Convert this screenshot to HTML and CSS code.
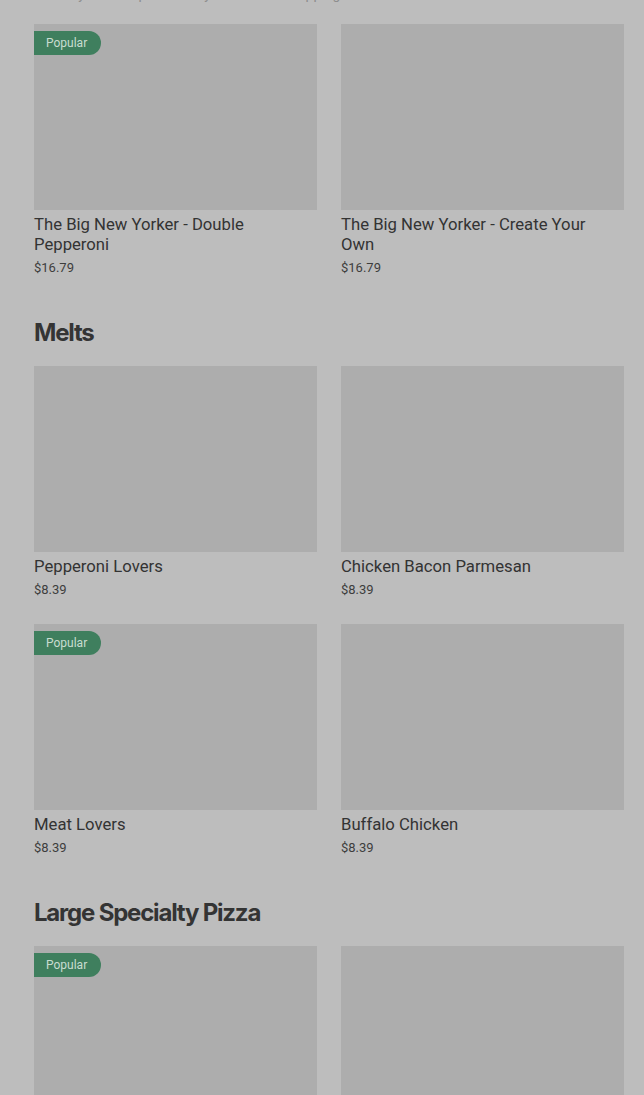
FILE: index.html
```html
<!DOCTYPE html>
<html lang="en">
<head>
<meta charset="utf-8">
<title>Menu</title>
<link rel="stylesheet" href="styles.css">
</head>
<body>
<main class="page">
  <p class="cut-text">Create your own pizza with your favourite toppings</p>

  <section class="section first">
    <div class="grid">
      <article class="item">
        <div class="thumb"><span class="badge">Popular</span></div>
        <h3 class="name">The Big New Yorker - Double Pepperoni</h3>
        <p class="price">$16.79</p>
      </article>
      <article class="item">
        <div class="thumb"></div>
        <h3 class="name">The Big New Yorker - Create Your Own</h3>
        <p class="price">$16.79</p>
      </article>
    </div>
  </section>

  <section class="section">
    <h2 class="heading">Melts</h2>
    <div class="grid">
      <article class="item">
        <div class="thumb"></div>
        <h3 class="name">Pepperoni Lovers</h3>
        <p class="price">$8.39</p>
      </article>
      <article class="item">
        <div class="thumb"></div>
        <h3 class="name">Chicken Bacon Parmesan</h3>
        <p class="price">$8.39</p>
      </article>
      <article class="item">
        <div class="thumb"><span class="badge">Popular</span></div>
        <h3 class="name">Meat Lovers</h3>
        <p class="price">$8.39</p>
      </article>
      <article class="item">
        <div class="thumb"></div>
        <h3 class="name">Buffalo Chicken</h3>
        <p class="price">$8.39</p>
      </article>
    </div>
  </section>

  <section class="section">
    <h2 class="heading">Large Specialty Pizza</h2>
    <div class="grid">
      <article class="item">
        <div class="thumb"><span class="badge">Popular</span></div>
        <h3 class="name">Ultimate Pepperoni</h3>
        <p class="price">$21.59</p>
      </article>
      <article class="item">
        <div class="thumb"></div>
        <h3 class="name">Supreme</h3>
        <p class="price">$21.59</p>
      </article>
    </div>
  </section>
</main>
</body>
</html>
```

FILE: styles.css
```css
html, body {
  margin: 0;
  padding: 0;
  background: #bdbdbd;
  overflow: hidden;
}

.page {
  padding: 0 20px 0 34px;
  font-family: Roboto, "Liberation Sans", sans-serif;
  color: #363636;
}

.cut-text {
  margin: -15px 0 0 0;
  height: 18px;
  line-height: 18px;
  font-size: 14px;
  color: #8e8e8e;
  overflow: hidden;
}

.section {
  margin-top: 40px;
}

.section.first {
  margin-top: 21px;
}

.heading {
  margin: 0 0 17px 0;
  font-family: Inter, "Liberation Sans", sans-serif;
  font-size: 24px;
  line-height: 32px;
  font-weight: 700;
  letter-spacing: -1.2px;
  color: #343434;
}

.grid {
  display: grid;
  grid-template-columns: 283px 283px;
  column-gap: 24px;
  row-gap: 25px;
}

.item {
  display: flex;
  flex-direction: column;
}

.thumb {
  position: relative;
  height: 186px;
  background: #adadad;
}

.badge {
  position: absolute;
  top: 7px;
  left: 0;
  height: 24px;
  padding: 0 14px 0 12px;
  line-height: 24px;
  font-size: 12px;
  color: #c9ddd1;
  background: #3f7f5e;
  border-radius: 0 12px 12px 0;
}

.name {
  margin: 5px 0 0 0;
  padding-right: 8px;
  font-size: 16.7px;
  line-height: 20px;
  font-weight: 400;
  color: #333333;
}

.price {
  margin: 4px 0 0 0;
  font-size: 13px;
  line-height: 18px;
  color: #3d3d3d;
}
```
